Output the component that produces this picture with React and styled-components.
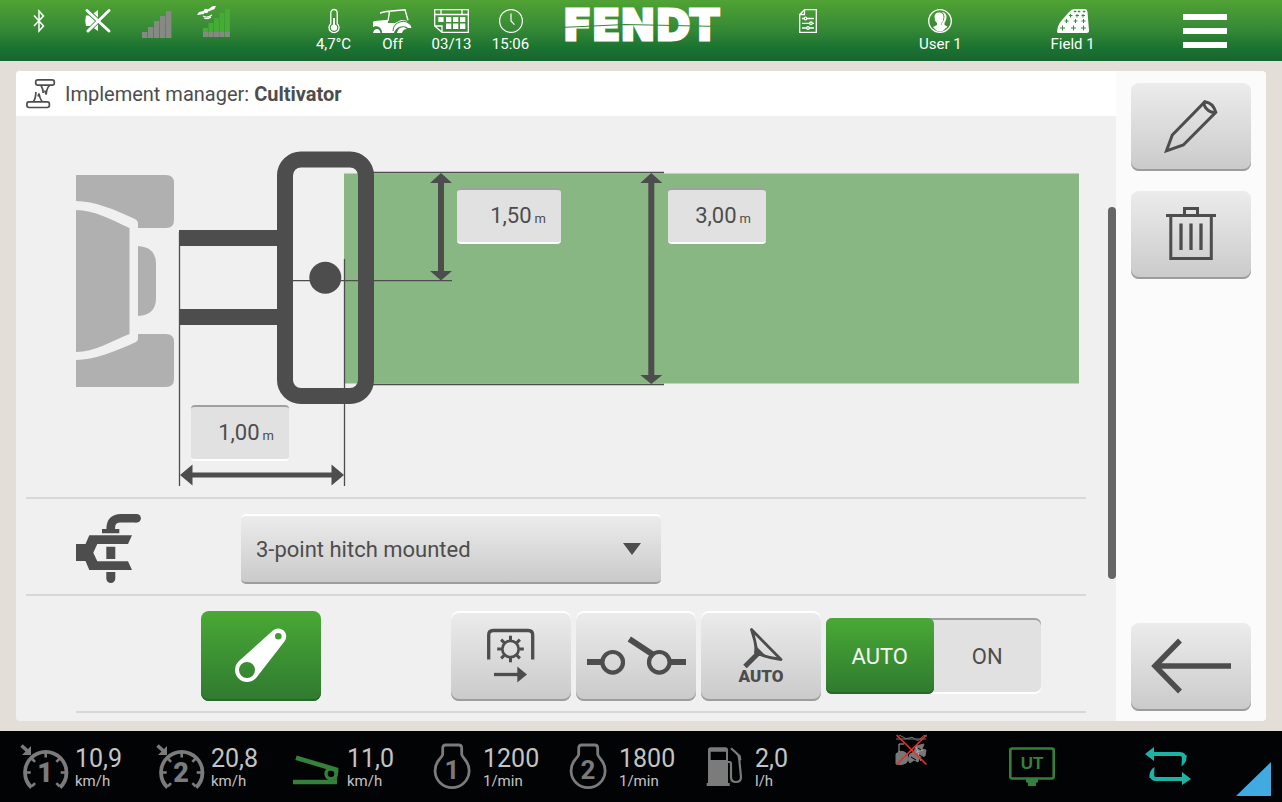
import React, { useState } from 'react';
import styled, { createGlobalStyle } from 'styled-components';

const ink = '#4d4d4d';
const page = '#e3dfd8';

const GlobalStyle = createGlobalStyle`
  *, *::before, *::after { box-sizing: border-box; }
  body {
    margin: 0;
    background: ${page};
    color: ${ink};
    font-family: Roboto, "Liberation Sans", sans-serif;
  }
  button, input, select { font: inherit; color: inherit; }
  svg { display: block; flex: none; overflow: visible; }
`;

const Screen = styled.div`
  display: flex;
  flex-direction: column;
  min-height: 100vh;
`;

/* ---------- top status bar ---------- */

const TopBar = styled.header`
  display: grid;
  grid-template-columns: 1fr auto 1fr;
  height: 61px;
  background: linear-gradient(#50a333, #388b36 45%, #1b7331 78%, #17652f);
  color: #fff;
`;

const StatusSide = styled.div`
  display: flex;
  justify-content: space-between;
  padding: 0 15px 0 9px;
`;

const StatusGroup = styled.div`
  display: flex;
`;

const StatusCell = styled.div`
  display: flex;
  flex-direction: column;
  align-items: center;
  gap: 2px;
  width: 59px;
  padding-top: 9px;
  font-size: 15px;
  line-height: 18px;
  white-space: nowrap;
`;

const Logo = styled.div`
  width: 172px;
  padding-top: 10px;
`;

const MenuSide = styled.nav`
  display: flex;
  padding: 0 11px 0 15px;
`;

const MenuButton = styled.button`
  display: flex;
  flex: 1;
  flex-direction: column;
  align-items: center;
  gap: 2px;
  padding: 9px 0 0;
  border: 0;
  background: none;
  font-size: 15px;
  line-height: 18px;
  white-space: nowrap;
`;

const Burger = styled.span`
  width: 44px;
  height: 34px;
  margin-top: 5px;
  border: solid #fff;
  border-width: 6px 0;
  display: flex;
  align-items: center;

  &::before {
    content: '';
    flex: 1;
    height: 6px;
    background: #fff;
  }
`;

/* ---------- panel ---------- */

const Panel = styled.main`
  display: flex;
  flex: 1;
  margin: 10px 16px;
  border-radius: 4px;
  overflow: hidden;
`;

const Content = styled.section`
  display: flex;
  flex: 1;
  flex-direction: column;
  min-width: 0;
  background: #f0f0f0;
`;

const TitleBar = styled.div`
  display: flex;
  align-items: center;
  gap: 9px;
  height: 45px;
  padding: 0 10px;
  background: #fff;
`;

const Title = styled.h1`
  margin: 0;
  font-size: 20px;
  font-weight: 400;
  line-height: 24px;
`;

const ScrollArea = styled.div`
  position: relative;
  flex: 1;
  padding: 0 30px 8px 10px;
`;

const ScrollThumb = styled.div`
  position: absolute;
  top: 91px;
  right: 0;
  bottom: 142px;
  width: 8px;
  border-radius: 4px;
  background: #666;
`;

const Section = styled.div`
  border-bottom: 2px solid #d7d7d7;
`;

const DiagramSection = styled(Section)`
  padding: 34px 7px 10px 50px;
`;

const Diagram = styled.div`
  position: relative;
  height: 337px;
`;

const Drawing = styled.svg`
  width: 100%;
  height: 337px;
  && { overflow: hidden; }
`;

const ValueField = styled.label`
  position: absolute;
  left: ${(p) => p.$x}px;
  top: ${(p) => p.$y}px;
  display: flex;
  align-items: baseline;
  gap: 3px;
  width: ${(p) => p.$width}px;
  height: 56px;
  padding: 13px 15px 0 8px;
  border-top: 2px solid #a0a0a0;
  border-bottom: 2px solid #fff;
  border-radius: 4px;
  background: #e1e1e1;
  font-size: 13px;
`;

const ValueInput = styled.input`
  flex: 1;
  min-width: 0;
  padding: 0;
  border: 0;
  outline: 0;
  background: none;
  font-size: 22px;
  line-height: 26px;
  text-align: right;
`;

const MountSection = styled(Section)`
  display: flex;
  align-items: center;
  gap: 99px;
  padding: 15px 50px 10px;
`;

const SelectWrap = styled.div`
  position: relative;
  width: 420px;
`;

const Select = styled.select`
  display: block;
  width: 100%;
  height: 70px;
  padding: 0 48px 0 15px;
  appearance: none;
  border: 0;
  border-top: 2px solid #fff;
  border-bottom: 2px solid #9c9c9c;
  border-radius: 5px;
  background: linear-gradient(#ececec, #cacaca);
  font-size: 22px;
`;

const SelectArrow = styled.svg`
  position: absolute;
  top: 29px;
  right: 20px;
  pointer-events: none;
`;

const ActionSection = styled(Section)`
  display: flex;
  align-items: center;
  justify-content: space-between;
  margin-left: 50px;
  padding: 15px 45px 10px 125px;
`;

const ActionGroup = styled.div`
  display: flex;
  align-items: center;
  gap: 5px;
`;

const IconButton = styled.button`
  flex: none;
  width: 120px;
  height: ${(p) => (p.$tall ? 90 : 88)}px;
  padding: 0;
  border: 0;
  border-radius: 8px;
  background: ${(p) => (p.$active ? 'linear-gradient(#49a935, #2f7a30)' : 'linear-gradient(#ececec, #cacaca)')};
  box-shadow: ${(p) =>
    p.$active ? 'inset 0 -2px #2a672b' : p.$tall ? 'inset 0 2px #fff, inset 0 -2px #9c9c9c' : 'inset 0 -2px #9c9c9c'};
`;

const Toggle = styled.fieldset`
  display: flex;
  width: 215px;
  height: 76px;
  margin: 0;
  padding: 0;
  border: 0;
  border-radius: 6px;
  background: #e1e1e1;
  box-shadow: inset 0 2px #a0a0a0, inset 0 -2px #fff;
`;

const ToggleOption = styled.label`
  position: relative;
  display: flex;
  flex: 1;
  align-items: center;
  justify-content: center;
  height: 76px;
  border-radius: 6px;
  font-size: 22px;

  &:has(input:checked) {
    background: linear-gradient(#49a935, #2f7a30);
    box-shadow: inset 0 -2px #2a672b;
    color: #f4fbee;
  }

  input {
    position: absolute;
    inset: 0;
    margin: 0;
    opacity: 0;
  }
`;

const SideBar = styled.aside`
  display: flex;
  flex: none;
  flex-direction: column;
  gap: 20px;
  width: 150px;
  padding: 12px 15px 10px;
  background: #fbfbfb;

  & > :last-child { margin-top: auto; }
`;

/* ---------- bottom bar ---------- */

const BottomBar = styled.footer`
  display: flex;
  justify-content: space-between;
  height: 71px;
  padding: 0 11px 0 20px;
  background: #020304;
  color: #c4c4c4;
`;

const BarGroup = styled.div`
  display: flex;
`;

const Readout = styled.div`
  display: flex;
  gap: 7px;
  width: 136px;
  padding-top: 12px;
`;

const ReadoutText = styled.div`
  display: flex;
  flex-direction: column;
`;

const ReadoutValue = styled.span`
  font-size: 25px;
  line-height: 31px;
`;

const ReadoutUnit = styled.span`
  font-size: 15px;
  line-height: 14px;
`;

const BarCell = styled.div`
  display: flex;
  justify-content: center;
  width: 136px;
  padding-top: 16px;
`;

const CornerCell = styled.div`
  width: 128px;
  padding: 3px 0 0 60px;
`;

const Handle = styled.div`
  align-self: flex-end;
  padding-bottom: 6px;
`;

/* ---------- icons ---------- */

const BluetoothIcon = () => (
  <svg width="12" height="24" viewBox="0 0 12 24" fill="none" stroke="#fff" strokeWidth="1.5">
    <path d="M1 6.500l9.500 10.500L6 22V2l4.500 5L1 17" />
  </svg>
);

const MuteIcon = () => (
  <svg width="26" height="24" viewBox="0 0 26 24">
    <path d="M1 6.500h4.500L13 1v21l-7.500-5H1q-1.500-5 0-10.500z" fill="#fff" />
    <path d="M2 1.500l22 20.500M24 1.500L3 22" stroke="#388b36" strokeWidth="4.500" />
    <path d="M2 1.500l22 20.500M24 1.500L3 22" stroke="#fff" strokeWidth="3" strokeLinecap="round" />
  </svg>
);

const SignalIcon = () => (
  <svg width="30" height="29" viewBox="0 0 30 29" fill="#858a83">
    {[23, 18, 12, 7, 2].map((y, i) => (
      <rect key={y} x={i * 6} y={y} width="5.400" height={29 - y} />
    ))}
  </svg>
);

const GpsIcon = () => (
  <svg width="38" height="28" viewBox="0 0 38 28">
    {[19, 14, 9, 4, 0].map((y, i) => (
      <g key={y}>
        <rect x={6 + i * 5.500} y={y} width="4.900" height={28 - y} fill="#45ad36" />
        <rect x={6 + i * 5.500} y="23" width="4.900" height="5" fill="#858a83" />
      </g>
    ))}
    <g fill="#fff">
      <path d="M0 6l2-3 6-1.500-1 3.500zM10 1l6-4h3l-1.500 3-6 2.500z" />
      <circle cx="9" cy="2" r="2.200" />
    </g>
    <path d="M6 7q4 2.500 9-1M7 9q4 1.500 7-1" fill="none" stroke="#fff" strokeWidth="1.200" />
  </svg>
);

const ThermometerIcon = () => (
  <svg width="24" height="24" viewBox="0 0 24 24">
    <path d="M8.800 14.800V3.700a3.200 3.200 0 0 1 6.400 0v11.100a5 5 0 1 1-6.400 0z" fill="none" stroke="#fff" strokeWidth="1.300" />
    <circle cx="12" cy="18.600" r="3.200" fill="#fff" />
    <path d="M12 9v9" stroke="#fff" strokeWidth="2" />
  </svg>
);

const TractorIcon = () => (
  <svg width="39" height="24" viewBox="0 0 39 24">
    <path d="M0 13.500Q0 12 2 12l13-1.200V14q5 0 7 0l6-3 5 .5 4.500 4.500 1 3h-3.500a9 9 0 0 0-14 5h-12q0-5-4-6.500-3-1-5 1z" fill="#fff" />
    <path d="M0 24q1-4 4-4t3.500 4zM24 24q1-6 7-6l3 2q-4 0-5 4z" fill="#fff" />
    <path d="M20 22a10 10 0 0 1 18-5.500M0 18.500q6-2 8.500 5.500" fill="none" stroke="#388b36" strokeWidth="1" />
    <path d="M7 4l6-1.500L32 .700l3 10.500M16.500 2.500L15 12" fill="none" stroke="#fff" strokeWidth="1.400" />
  </svg>
);

const CalendarIcon = () => (
  <svg width="35" height="24" viewBox="0 0 35 24">
    <path d="M.700.700h33.600v22.600H8L.700 17zM8 23v-6H1M.700 5.500h33.600M7 .700v5M28 .700v5" fill="none" stroke="#fff" strokeWidth="1.300" />
    <g fill="#fff">
      {[4.3, 12, 19, 26].map((x) => (
        <rect key={x} x={x} y="8" width="5.300" height="5" />
      ))}
      {[12, 19, 26].map((x) => (
        <rect key={x} x={x} y="14.500" width="5.300" height="5.500" />
      ))}
    </g>
  </svg>
);

const ClockIcon = () => (
  <svg width="24" height="24" viewBox="0 0 24 24" fill="none" stroke="#fff" strokeWidth="1.200">
    <circle cx="12" cy="12" r="11.400" />
    <path d="M12 4.500V12l3.500 3.700" />
  </svg>
);

const FendtLogo = () => (
  <svg width="172" height="32" viewBox="0 0 172 32" role="img" aria-label="FENDT">
    <text
      x="86"
      y="30"
      textAnchor="middle"
      fontFamily="DejaVu Sans, sans-serif"
      fontWeight="700"
      fontSize="42"
      fill="#fff"
      stroke="#fff"
      strokeWidth="3"
    >
      FENDT
    </text>
    <path d="M6 17.500L70 14.500 166 16.500" fill="none" stroke="#358836" strokeWidth="1.200" />
  </svg>
);

const TasksIcon = () => (
  <svg width="18" height="24" viewBox="0 0 18 24" fill="none" stroke="#fff" strokeWidth="1.300">
    <path d="M5.500.700h11.800v22.600H.700V5.500zM5.500.700v4.800H.700M3 9.500h12M3 14.300h12M3 19h12" />
    <g fill="#388b36">
      <circle cx="6.500" cy="9.500" r="1.300" />
      <circle cx="12" cy="14.300" r="1.300" />
      <circle cx="9" cy="19" r="1.300" />
    </g>
  </svg>
);

const UserIcon = () => (
  <svg width="24" height="24" viewBox="0 0 24 24">
    <circle cx="12" cy="12" r="11.300" fill="none" stroke="#fff" strokeWidth="1.300" />
    <path d="M6.500 8Q6.500 3.500 11 3.500 15.500 3.500 15.500 8q0 4-2 6v2l4.500 2.500q-2.500 4-6 4t-7-4.500L9 16v-2Q6.500 12 6.500 8z" fill="#fff" />
    <path d="M14 3q4.500.5 4.500 5.500 0 3-2 5.500v2l3 1.500-1.500 2-4-3v-2.500q2.500-2.500 2.500-6.500Q16.500 5 14 3z" fill="#fff" />
  </svg>
);

const FieldIcon = () => (
  <svg width="32" height="24" viewBox="0 0 32 24">
    <path d="M0 22.500Q.500 16 5 11L12 3q2.500-3 6-3h9.500q2.500 0 3 3l1.500 18.500q0 2.500-2.500 2.500H1.500Q0 24 0 22.500z" fill="#fff" />
    <path
      d="M5.500 16.500v5M3 19h5M16.500 16.500v5M14 19h5M26.500 16.500v5M24 19h5M9.500 10v4M7.500 12h4M18.500 10v4M16.500 12h4M26.500 10v4M24.500 12h4M13.500 5v3.500M12 6.500h3.500M20 5v3.500M18.500 6.500h3.500M26 5v3.500M24.500 6.500H28M18 1.500v2M16.800 2.500h2.500M22 1.500v2M20.800 2.500h2.500M27 1.500v2M25.800 2.500h2.500"
      stroke="#388b36"
      strokeWidth="1"
    />
  </svg>
);

const ImplementIcon = () => (
  <svg width="30" height="30" viewBox="0 0 30 30" fill="none" stroke={ink} strokeWidth="1.700">
    <rect x="9.700" y=".900" width="18.600" height="5.200" rx="2.200" />
    <rect x=".900" y="22.900" width="22.500" height="5.600" rx="2.200" />
    <path d="M15 6.500q2 3 2.200 7.500M23.500 6.500q-3 3-3.300 9l-1.500-4M7.500 22.500q2.200-3 2.400-9.500M16 22.500q-2.300-3-3-8l-1 3" />
  </svg>
);

const HitchIcon = () => (
  <svg width="66" height="70" viewBox="0 0 66 70" fill={ink}>
    <path d="M34.700 17v-2.500Q34.700 4.200 45 4.200h15.600" fill="none" stroke={ink} strokeWidth="8.600" />
    <circle cx="60.600" cy="4.200" r="4.300" />
    <path d="M26 15h17.300v4.300H26z" />
    <path d="M0 30h9.500l3.800-8.700H56L52 30H21.300l-4 8.700 4 8.600H52l4 8.700H13.300l-3.800-9H0z" />
    <path d="M30.300 32.700h9V45h-9zM30.300 58h9v6.500a4.500 4.500 0 0 1-9 0z" />
  </svg>
);

const LinkArmIcon = () => (
  <svg width="120" height="90" viewBox="0 0 120 90">
    <path
      fill="#fff"
      fillRule="evenodd"
      d="M55.500 66.400A12 12 0 1 1 38 50.100L71.900 19.400A8 8 0 0 1 83.600 30.200zM46 51a8 8 0 1 0 0 16 8 8 0 0 0 0-16zM77.300 22a3.300 3.300 0 1 0 0 6.600 3.300 3.300 0 0 0 0-6.600z"
    />
  </svg>
);

const PtoIcon = () => (
  <svg width="120" height="90" viewBox="0 0 120 90" fill="none" stroke={ink}>
    <path d="M37.700 48.500V24q0-4.500 4.500-4.500h35q4.500 0 4.500 4.500v24.500" strokeWidth="3.300" />
    <circle cx="59.500" cy="38" r="8.200" strokeWidth="2.700" />
    {[0, 45, 90, 135, 180, 225, 270, 315].map((a) => (
      <path key={a} d="M59.500 29v-4.300" strokeWidth="3" transform={`rotate(${a} 59.500 38)`} />
    ))}
    <path d="M43 63.500h24" strokeWidth="3.300" />
    <path d="M66.300 55.500l9.700 8-9.700 8z" fill={ink} stroke="none" />
  </svg>
);

const SwitchIcon = () => (
  <svg width="120" height="90" viewBox="0 0 120 90" fill="none" stroke={ink}>
    <path d="M11 51h15M95 51h15M53.300 28l25 16.500" strokeWidth="6" />
    <circle cx="36.700" cy="51.300" r="10.300" strokeWidth="4.200" />
    <circle cx="83.300" cy="51.300" r="10.300" strokeWidth="4.200" />
  </svg>
);

const AutoSteerIcon = () => (
  <svg width="120" height="90" viewBox="0 0 120 90">
    <path d="M50.500 18.500L80 48.500Q68 47 59 43.500L55.500 40Q54.500 30 50.500 18.500z" fill="none" stroke={ink} strokeWidth="2.800" strokeLinejoin="round" />
    <path d="M44 55.500L58 41.500" stroke={ink} strokeWidth="5" />
    <path d="M54 34l4 4 7 7h-8l-4-3z" fill={ink} />
    <text x="60" y="71" textAnchor="middle" fontSize="17" fontWeight="900" fill={ink}>AUTO</text>
  </svg>
);

const PencilIcon = () => (
  <svg width="120" height="88" viewBox="0 0 120 88" fill="none" stroke={ink} strokeWidth="3">
    <path d="M35.500 67.800L41.300 52 74 18.700q8 1 10.800 10.500L52.300 62z" />
    <path d="M74 18.700q-2.500 3 2 7.500t8.800 3" />
  </svg>
);

const TrashIcon = () => (
  <svg width="120" height="88" viewBox="0 0 120 88" fill="none" stroke={ink} strokeWidth="3">
    <path d="M35 24.500h50M53.500 24v-6.500h13V24M39.800 25v42.500h40.500V25" />
    <path d="M50 32.500V59M60 32.500V59M70 32.500V59" strokeWidth="3.300" />
  </svg>
);

const BackIcon = () => (
  <svg width="120" height="88" viewBox="0 0 120 88" fill="none" stroke={ink} strokeWidth="5.500">
    <path d="M49 17.500L24 43l25 25.500M24 43h76" />
  </svg>
);

const grey = '#7b7b7b';

const CruiseIcon = ({ number }) => (
  <svg width="48" height="48" viewBox="0 0 48 48" fill="none" stroke={grey}>
    <path d="M11.500 44.500A20.700 20.700 0 1 1 40 44.500" strokeWidth="3.800" />
    {[-135, -90, -45, 0, 45, 90, 135].map((a) => (
      <path key={a} d="M25.700 10v4.500" strokeWidth="2.600" transform={`rotate(${a} 25.700 29.500)`} />
    ))}
    <path d="M1.500 2.500L8 8.500" strokeWidth="3.600" />
    <path d="M11 3v9H2z" fill={grey} stroke="none" />
    <text x="25" y="38.700" textAnchor="middle" fontSize="27" fontWeight="900" fill={grey} stroke="none">{number}</text>
  </svg>
);

const PedalIcon = () => (
  <svg width="48" height="48" viewBox="0 0 48 48" fill="none" stroke="#35803a">
    <path d="M4 14.700l42 12.500" strokeWidth="4.600" />
    <path d="M1 39h44" strokeWidth="4.600" />
    <path d="M45.500 27l-2 10" strokeWidth="2.500" />
    <circle cx="39" cy="30.800" r="5" strokeWidth="3.400" />
  </svg>
);

const EngineIcon = ({ number }) => (
  <svg width="48" height="48" viewBox="0 0 48 48" fill="none" stroke={grey} strokeWidth="2.800">
    <path d="M11.300 16.500L14 13q.700-1 .700-2.500V5q0-3 3-3h13q3 0 3 3v5.500q0 1.500.700 2.500l2.500 3.500A17 17 0 1 1 11.300 16.500z" />
    <text x="24" y="36.300" textAnchor="middle" fontSize="26" fontWeight="700" fill={grey} stroke="none">{number}</text>
  </svg>
);

const FuelIcon = () => (
  <svg width="48" height="48" viewBox="0 0 48 48" fill="none" stroke={grey}>
    <path d="M8 40V7q0-2.700 2.700-2.700h14.600Q28 4.300 28 7v33h1.700v3h-23v-3zM10.700 8.700V17H26V8.700z" fill={grey} fillRule="evenodd" stroke="none" />
    <path d="M28 19h1.500q1.500 0 1.500 2v13q0 5 5 5t5-5L39.500 19V13L31 5.300" strokeWidth="2.200" />
    <path d="M35 7.500l5.500 5.500 1 4-3 .5-1-4z" fill={grey} stroke="none" />
  </svg>
);

const NoGuidanceIcon = () => (
  <svg width="31" height="31" viewBox="0 0 31 31" fill="none" stroke="#777" strokeWidth="1">
    <path d="M1 3q3-3 6 0t6 1 6 1 6-1 6-2M0 5h30" />
    <path d="M0 20q5-5 10-1 4 5 0 10-5 3-10 1zM12 26l2-6 4-2 2-6 8-2-2 5 4 1-1 6-5 1-2 5-4-2-4 3z" fill="#777" />
    <path d="M3 18v-8h5M20 13l5 14M17 19l10-3" stroke="#aaa" />
    <path d="M15 23l5 3M22 14l3 2M23 21l4 2" stroke="#020304" />
    <path d="M.500 1l30 29.500M30.500 1L.500 30.500" stroke="#ee2b24" strokeWidth="1.700" />
  </svg>
);

const TerminalIcon = () => (
  <svg width="46" height="40" viewBox="0 0 46 40">
    <rect x="1.300" y="1.500" width="43.400" height="30" rx="2" fill="none" stroke="#35803a" strokeWidth="2.600" />
    <path d="M17 32h12v3l-2 1v3h-8v-3l-2-1z" fill="#35803a" />
    <text x="23" y="22" textAnchor="middle" fontFamily="Liberation Sans, sans-serif" fontSize="17" fontWeight="700" fill="#35803a">UT</text>
  </svg>
);

const SwapIcon = () => (
  <svg width="46" height="38" viewBox="0 0 46 38" fill="none" stroke="#1cb3a4" strokeWidth="4">
    <path d="M7 7h28q4 0 4 4M39 32H11q-4 0-4-4" />
    <path d="M0 7l9-7v14zM46 32l-9-7v13zM37 8h4.500q1 7-5 11.500zM9 31H4.500q-1-7 5-11z" fill="#1cb3a4" stroke="none" />
  </svg>
);

/* ---------- implement geometry ---------- */

const ImplementDrawing = () => (
  <Drawing aria-hidden="true">
    <rect x="268" y="23.500" width="100%" height="210" fill="#89b783" />
    <g fill="#b0b0b0">
      <path d="M0 25h90q8 0 8 8v37q0 8-8 8H62v-4q0-3.500-3-5C40 60 18 51 0 51z" />
      <path d="M0 237h90q8 0 8-8v-37q0-8-8-8H62v4q0 3-3 4.500C40 201 18 210 0 210z" />
      <path d="M0 60c18 0 36 10 53.500 18v106C36 191 18 202 0 202z" />
      <path d="M62 96q18 1 18 18v34q0 17-18 18z" />
    </g>
    <g stroke={ink} fill="none" strokeWidth="1.300">
      <path d="M103.500 82v254M268.500 109v227M217 130.700h159M297 22.500h291M297 234.500h291" />
      <path d="M103 88h100M103 167h100" strokeWidth="16" />
      <rect x="209" y="9.500" width="81" height="236.500" rx="16" strokeWidth="16" />
    </g>
    <g fill={ink}>
      <circle cx="249.300" cy="127.800" r="16" />
      <path d="M365 23l11 10h-8v88h8l-11 9.500L354 121h8V33h-8z" />
      <path d="M575.300 23l11 10h-8v192h8l-11 9-11-9h8V33h-8z" />
      <path d="M104 325l12.500-10.500v8h139v-8L268 325l-12.500 10.500v-8h-139v8z" />
    </g>
  </Drawing>
);

const statusItems = [
  { icon: <ThermometerIcon />, text: '4,7°C' },
  { icon: <TractorIcon />, text: 'Off' },
  { icon: <CalendarIcon />, text: '03/13' },
  { icon: <ClockIcon />, text: '15:06' },
];

const fields = [
  { label: 'Offset', value: '1,50', x: 381, y: 38, width: 104 },
  { label: 'Working width', value: '3,00', x: 592, y: 38, width: 98 },
  { label: 'Distance', value: '1,00', x: 115, y: 255, width: 98 },
];

const readouts = [
  { icon: <CruiseIcon number="1" />, value: '10,9', unit: 'km/h' },
  { icon: <CruiseIcon number="2" />, value: '20,8', unit: 'km/h' },
  { icon: <PedalIcon />, value: '11,0', unit: 'km/h' },
  { icon: <EngineIcon number="1" />, value: '1200', unit: '1/min' },
  { icon: <EngineIcon number="2" />, value: '1800', unit: '1/min' },
  { icon: <FuelIcon />, value: '2,0', unit: 'l/h' },
];

export default function App() {
  const [mode, setMode] = useState('AUTO');

  return (
    <Screen>
      <GlobalStyle />
      <TopBar>
        <StatusSide>
          <StatusGroup>
            <StatusCell><BluetoothIcon /></StatusCell>
            <StatusCell><MuteIcon /></StatusCell>
            <StatusCell><SignalIcon /></StatusCell>
            <StatusCell><GpsIcon /></StatusCell>
          </StatusGroup>
          <StatusGroup>
            {statusItems.map((item) => (
              <StatusCell key={item.text}>
                {item.icon}
                <span>{item.text}</span>
              </StatusCell>
            ))}
          </StatusGroup>
        </StatusSide>
        <Logo><FendtLogo /></Logo>
        <MenuSide>
          <MenuButton aria-label="Tasks"><TasksIcon /></MenuButton>
          <MenuButton><UserIcon /><span>User 1</span></MenuButton>
          <MenuButton><FieldIcon /><span>Field 1</span></MenuButton>
          <MenuButton aria-label="Menu"><Burger /></MenuButton>
        </MenuSide>
      </TopBar>

      <Panel>
        <Content>
          <TitleBar>
            <ImplementIcon />
            <Title>Implement manager: <strong>Cultivator</strong></Title>
          </TitleBar>
          <ScrollArea>
            <DiagramSection>
              <Diagram>
                <ImplementDrawing />
                {fields.map((f) => (
                  <ValueField key={f.label} $x={f.x} $y={f.y} $width={f.width}>
                    <ValueInput aria-label={f.label} defaultValue={f.value} />
                    <span>m</span>
                  </ValueField>
                ))}
              </Diagram>
            </DiagramSection>
            <MountSection>
              <HitchIcon />
              <SelectWrap>
                <Select aria-label="Mounting" defaultValue="hitch">
                  <option value="hitch">3-point hitch mounted</option>
                </Select>
                <SelectArrow width="18" height="12" viewBox="0 0 18 12">
                  <path d="M0 0h18L9 12z" fill={ink} />
                </SelectArrow>
              </SelectWrap>
            </MountSection>
            <ActionSection>
              <IconButton $tall $active aria-label="Linkage"><LinkArmIcon /></IconButton>
              <ActionGroup>
                <IconButton $tall aria-label="Power take-off"><PtoIcon /></IconButton>
                <IconButton $tall aria-label="Contact"><SwitchIcon /></IconButton>
                <IconButton $tall aria-label="Automatic steering"><AutoSteerIcon /></IconButton>
                <Toggle aria-label="Mode">
                  {['AUTO', 'ON'].map((m) => (
                    <ToggleOption key={m}>
                      <input type="radio" name="mode" checked={mode === m} onChange={() => setMode(m)} />
                      {m}
                    </ToggleOption>
                  ))}
                </Toggle>
              </ActionGroup>
            </ActionSection>
            <ScrollThumb />
          </ScrollArea>
        </Content>
        <SideBar>
          <IconButton aria-label="Edit"><PencilIcon /></IconButton>
          <IconButton aria-label="Delete"><TrashIcon /></IconButton>
          <IconButton aria-label="Back"><BackIcon /></IconButton>
        </SideBar>
      </Panel>

      <BottomBar>
        <BarGroup>
          {readouts.map((r) => (
            <Readout key={r.value}>
              {r.icon}
              <ReadoutText>
                <ReadoutValue>{r.value}</ReadoutValue>
                <ReadoutUnit>{r.unit}</ReadoutUnit>
              </ReadoutText>
            </Readout>
          ))}
        </BarGroup>
        <BarGroup>
          <CornerCell><NoGuidanceIcon /></CornerCell>
          <BarCell><TerminalIcon /></BarCell>
          <BarCell><SwapIcon /></BarCell>
          <Handle>
            <svg width="35" height="34" viewBox="0 0 35 34">
              <path d="M35 0v34H0z" fill="#41abe1" />
            </svg>
          </Handle>
        </BarGroup>
      </BottomBar>
    </Screen>
  );
}
